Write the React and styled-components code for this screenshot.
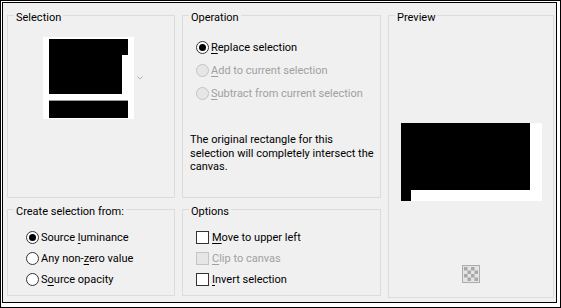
import React from 'react'
import styled, { createGlobalStyle } from 'styled-components'

const GlobalStyle = createGlobalStyle`
   html, body {
      margin: 0;
      padding: 0;
      background: #fff;
   }
   body {
      font-family: Roboto, "Liberation Sans", sans-serif;
      font-size: 11px;
      color: #000;
   }
`

const Frame = styled.div`
   width: 561px;
   height: 308px;
   box-sizing: border-box;
   border: 1px solid #000;
   padding: 1px 3px 4px 1px;
   background: #fff;
`

const Dialog = styled.div`
   height: 100%;
   box-sizing: border-box;
   border: 1px solid #000;
   background: #f0f0f0;
   padding: 4px 0 0 4px;
   display: grid;
   grid-template-columns: 168px 199px 166px;
   grid-template-rows: 191px 97px;
   column-gap: 7px;
   row-gap: 3px;
   align-items: start;
`

const Group = styled.fieldset`
   margin: 0;
   padding: 0;
   min-width: 0;
   box-sizing: border-box;
   border: 1px solid #dcdcdc;
   height: ${(p) => p.$h}px;
   grid-row: ${(p) => (p.$span ? '1 / span 2' : 'auto')};
   grid-column: ${(p) => p.$col};
`

const Legend = styled.legend`
   padding: 4px 2px 0;
   margin-left: 6px;
   line-height: 13px;
`

const List = styled.div`
   margin: ${(p) => p.$top}px 0 0 ${(p) => p.$left}px;
`

const Option = styled.label`
   display: flex;
   align-items: center;
   height: ${(p) => p.$h}px;
   color: ${(p) => (p.$disabled ? '#a0a0a0' : '#000')};
   white-space: nowrap;
`

const RadioMark = styled.span`
   width: 13px;
   height: 13px;
   box-sizing: border-box;
   border-radius: 50%;
   border: 1px solid ${(p) => (p.$disabled ? '#c4c4c4' : '#333')};
   background: ${(p) => (p.$disabled ? '#e6e6e6' : '#fff')};
   display: flex;
   align-items: center;
   justify-content: center;
   margin-right: 2px;
   flex: none;

   &::after {
      content: '';
      width: 7px;
      height: 7px;
      border-radius: 50%;
      background: #000;
      display: ${(p) => (p.$checked ? 'block' : 'none')};
   }
`

const CheckMark = styled.span`
   width: 13px;
   height: 13px;
   box-sizing: border-box;
   border: 1px solid ${(p) => (p.$disabled ? '#c4c4c4' : '#333')};
   background: ${(p) => (p.$disabled ? '#e6e6e6' : '#fff')};
   margin-right: 3px;
   flex: none;
`

const Key = styled.span`
   text-decoration: underline;
   text-underline-offset: 2px;
`

const Note = styled.p`
   margin: 28px 0 0 7px;
   line-height: 13.5px;
`

const ThumbRow = styled.div`
   display: flex;
   align-items: center;
   gap: 3px;
   margin: 13px 0 0 35px;
`

const PreviewBody = styled.div`
   display: flex;
   flex-direction: column;
   align-items: center;
`

const PreviewImage = styled.svg`
   display: block;
   margin-top: 99px;
`

const CheckerButton = styled.svg`
   display: block;
   margin-top: 64px;
`

function Radio({ checked, disabled, h = 23, children }) {
   return (
      <Option $h={h} $disabled={disabled}>
         <RadioMark $checked={checked} $disabled={disabled} />
         <span>{children}</span>
      </Option>
   )
}

function Check({ disabled, children }) {
   return (
      <Option $h={21} $disabled={disabled}>
         <CheckMark $disabled={disabled} />
         <span>{children}</span>
      </Option>
   )
}

function Thumbnail() {
   return (
      <svg width="91" height="82" viewBox="0 0 91 82">
         <rect width="91" height="82" fill="#fff" />
         <rect x="6" y="2" width="73" height="55" fill="#000" />
         <rect x="79" y="2" width="6" height="16" fill="#000" />
         <rect x="6" y="63" width="79" height="1" fill="#9a9a9a" />
         <rect x="6" y="64" width="79" height="17" fill="#000" />
      </svg>
   )
}

function Chevron() {
   return (
      <svg width="6" height="4" viewBox="0 0 6 4">
         <polyline points="0.5,0.5 3,3 5.5,0.5" fill="none" stroke="#b0b0b0" strokeWidth="1" />
      </svg>
   )
}

function Checker() {
   const cells = []
   for (let r = 0; r < 4; r++) {
      for (let c = 0; c < 4; c++) {
         if ((r + c) % 2 === 0) {
            cells.push(<rect key={`${r}-${c}`} x={2 + c * 3.5} y={2 + r * 3.5} width="3.5" height="3.5" fill="#a8a8a8" />)
         }
      }
   }
   return (
      <CheckerButton width="18" height="18" viewBox="0 0 18 18">
         <rect x="0.5" y="0.5" width="17" height="17" fill="#e4e4e4" stroke="#adadad" />
         {cells}
      </CheckerButton>
   )
}

export default function App() {
   return (
      <>
         <GlobalStyle />
         <Frame>
            <Dialog>
               <Group $h={191} $col={1}>
                  <Legend>Selection</Legend>
                  <ThumbRow>
                     <Thumbnail />
                     <Chevron />
                  </ThumbRow>
               </Group>

               <Group $h={191} $col={2}>
                  <Legend>Operation</Legend>
                  <List $top={12} $left={13}>
                     <Radio checked><Key>R</Key>eplace selection</Radio>
                     <Radio disabled><Key>A</Key>dd to current selection</Radio>
                     <Radio disabled><Key>S</Key>ubtract from current selection</Radio>
                  </List>
                  <Note>
                     The original rectangle for this
                     <br />
                     selection will completely intersect the
                     <br />
                     canvas.
                  </Note>
               </Group>

               <Group $h={291} $col={3} $span>
                  <Legend>Preview</Legend>
                  <PreviewBody>
                     <PreviewImage width="141" height="78" viewBox="0 0 141 78">
                        <rect width="141" height="78" fill="#fff" />
                        <rect width="129" height="67" fill="#000" />
                        <rect y="67" width="10" height="11" fill="#000" />
                     </PreviewImage>
                     <Checker />
                  </PreviewBody>
               </Group>

               <Group $h={95} $col={1}>
                  <Legend>Create selection from:</Legend>
                  <List $top={9} $left={18}>
                     <Radio checked h={21}>Source <Key>l</Key>uminance</Radio>
                     <Radio h={21}>Any non-<Key>z</Key>ero value</Radio>
                     <Radio h={21}>S<Key>o</Key>urce opacity</Radio>
                  </List>
               </Group>

               <Group $h={95} $col={2}>
                  <Legend>Options</Legend>
                  <List $top={9} $left={13}>
                     <Check><Key>M</Key>ove to upper left</Check>
                     <Check disabled><Key>C</Key>lip to canvas</Check>
                     <Check><Key>I</Key>nvert selection</Check>
                  </List>
               </Group>
            </Dialog>
         </Frame>
      </>
   )
}
